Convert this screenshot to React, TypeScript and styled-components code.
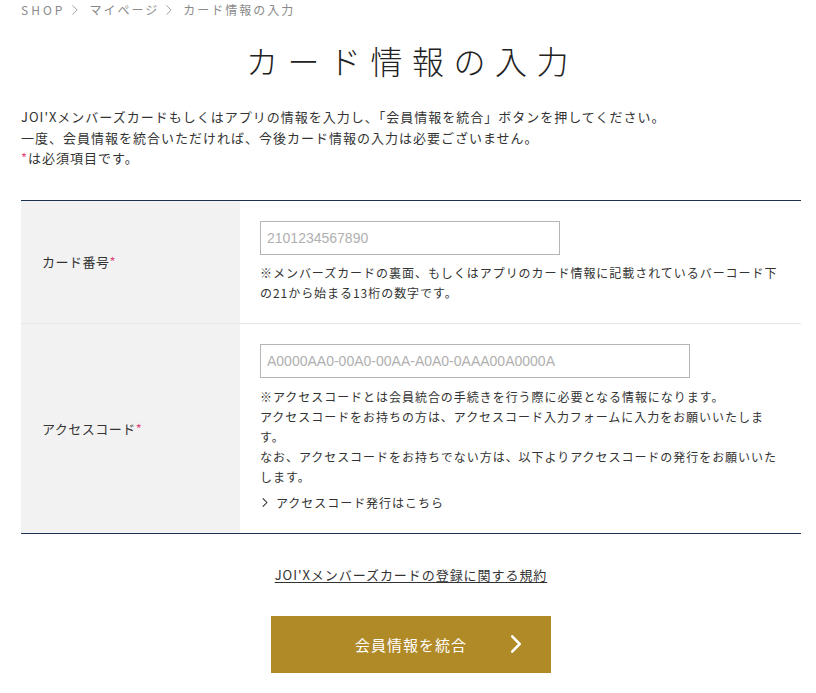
import React from 'react';
import styled, { createGlobalStyle } from 'styled-components';

const GlobalStyle = createGlobalStyle`
  html, body {
    margin: 0;
    padding: 0;
    background: #fff;
  }
  body {
    font-family: "Noto Sans CJK JP", "Noto Sans", sans-serif;
    color: #333;
  }
`;

const Page = styled.div`
  width: 780px;
  padding: 0 0 20px 21px;
`;

const Breadcrumb = styled.nav`
  display: flex;
  align-items: center;
  height: 20px;
  font-size: 12px;
  letter-spacing: 2px;
  color: #8a8a8a;
`;

const Crumb = styled.span<{ $wide?: boolean }>`
  line-height: 20px;
  letter-spacing: ${p => (p.$wide ? '3px' : '2px')};
`;

const CrumbSep = styled.svg`
  width: 8px;
  height: 10px;
  margin: 0 10px 0 6px;
`;

const Title = styled.h1`
  margin: 16px 0 0;
  text-align: center;
  font-size: 32px;
  line-height: 48px;
  font-weight: 300;
  letter-spacing: 9.5px;
  padding-left: 2px;
  color: #222;
`;

const Lead = styled.p`
  margin: 23px 0 0;
  font-size: 13px;
  line-height: 20.5px;
  letter-spacing: 1px;
  color: #333;
`;

const Req = styled.span`
  color: #e4497f;
`;

const Table = styled.div`
  margin-top: 31px;
  border-top: 1px solid #1f3154;
  border-bottom: 1px solid #1f3154;
`;

const Row = styled.div<{ $last?: boolean }>`
  display: grid;
  grid-template-columns: 219px 1fr;
  border-bottom: ${p => (p.$last ? 'none' : '1px solid #e6e6e6')};
`;

const Label = styled.div`
  background: #f2f2f2;
  display: flex;
  align-items: center;
  padding-left: 21px;
  font-size: 13px;
  letter-spacing: 0.5px;
  color: #333;
`;

const Cell = styled.div`
  padding: 20px;
`;

const Input = styled.input<{ $w: number }>`
  display: block;
  box-sizing: border-box;
  width: ${p => p.$w}px;
  height: 34px;
  margin: 0;
  border: 1px solid #b5b5b5;
  padding: 0 6px;
  font-family: "Liberation Sans", Arial, sans-serif;
  font-size: 14px;
  color: #333;
  outline: none;
  &::placeholder {
    color: #b0b0b0;
  }
`;

const Note = styled.p<{ $mt: number }>`
  margin: ${p => p.$mt}px 0 0;
  font-size: 12px;
  line-height: 20px;
  letter-spacing: 0.96px;
  color: #333;
`;

const SubLink = styled.a`
  display: flex;
  align-items: center;
  margin-top: 6px;
  font-size: 12px;
  line-height: 20px;
  letter-spacing: 0.96px;
  color: #333;
  text-decoration: none;
`;

const SubChevron = styled.svg`
  width: 6px;
  height: 9px;
  margin: 0 8px 0 2px;
`;

const Terms = styled.div`
  margin-top: 29px;
  text-align: center;
  line-height: 20px;
`;

const TermsLink = styled.a`
  font-size: 13px;
  letter-spacing: 0.95px;
  color: #333;
  text-decoration: underline;
  text-underline-offset: 2px;
`;

const ButtonWrap = styled.div`
  display: flex;
  justify-content: center;
  margin-top: 31px;
`;

const Submit = styled.button`
  position: relative;
  width: 280px;
  height: 57px;
  border: none;
  background: #b18a28;
  color: #fff;
  font-family: "Noto Sans CJK JP", sans-serif;
  font-size: 15px;
  letter-spacing: 1px;
  cursor: pointer;
`;

const ButtonChevron = styled.svg`
  position: absolute;
  right: 30px;
  top: 50%;
  width: 10px;
  height: 18px;
  margin-top: -9px;
`;

const Chevron = ({ as: C, stroke, w }: { as: any; stroke: string; w: number }) => (
  <C viewBox="0 0 8 14" fill="none">
    <polyline points="1,1 7,7 1,13" stroke={stroke} strokeWidth={w} strokeLinecap="square" />
  </C>
);

export default function App() {
  return (
    <>
      <GlobalStyle />
      <Page>
        <Breadcrumb>
          <Crumb $wide>SHOP</Crumb>
          <Chevron as={CrumbSep} stroke="#999" w={1.3} />
          <Crumb>マイページ</Crumb>
          <Chevron as={CrumbSep} stroke="#999" w={1.3} />
          <Crumb>カード情報の入力</Crumb>
        </Breadcrumb>

        <Title>カード情報の入力</Title>

        <Lead>
          JOI'Xメンバーズカードもしくはアプリの情報を入力し、「会員情報を統合」ボタンを押してください。
          <br />
          一度、会員情報を統合いただければ、今後カード情報の入力は必要ございません。
          <br />
          <Req>*</Req>は必須項目です。
        </Lead>

        <Table>
          <Row>
            <Label>
              カード番号<Req>*</Req>
            </Label>
            <Cell>
              <Input $w={300} placeholder="2101234567890" />
              <Note $mt={8}>
                ※メンバーズカードの裏面、もしくはアプリのカード情報に記載されているバーコード下の21から始まる13桁の数字です。
              </Note>
            </Cell>
          </Row>
          <Row $last>
            <Label>
              アクセスコード<Req>*</Req>
            </Label>
            <Cell>
              <Input $w={430} placeholder="A0000AA0-00A0-00AA-A0A0-0AAA00A0000A" />
              <Note $mt={9}>
                ※アクセスコードとは会員統合の手続きを行う際に必要となる情報になります。
                <br />
                アクセスコードをお持ちの方は、アクセスコード入力フォームに入力をお願いいたします。
                <br />
                なお、アクセスコードをお持ちでない方は、以下よりアクセスコードの発行をお願いいたします。
              </Note>
              <SubLink href="#">
                <Chevron as={SubChevron} stroke="#333" w={1.6} />
                アクセスコード発行はこちら
              </SubLink>
            </Cell>
          </Row>
        </Table>

        <Terms>
          <TermsLink href="#">JOI'Xメンバーズカードの登録に関する規約</TermsLink>
        </Terms>

        <ButtonWrap>
          <Submit>
            会員情報を統合
            <Chevron as={ButtonChevron} stroke="#fff" w={2} />
          </Submit>
        </ButtonWrap>
      </Page>
    </>
  );
}
